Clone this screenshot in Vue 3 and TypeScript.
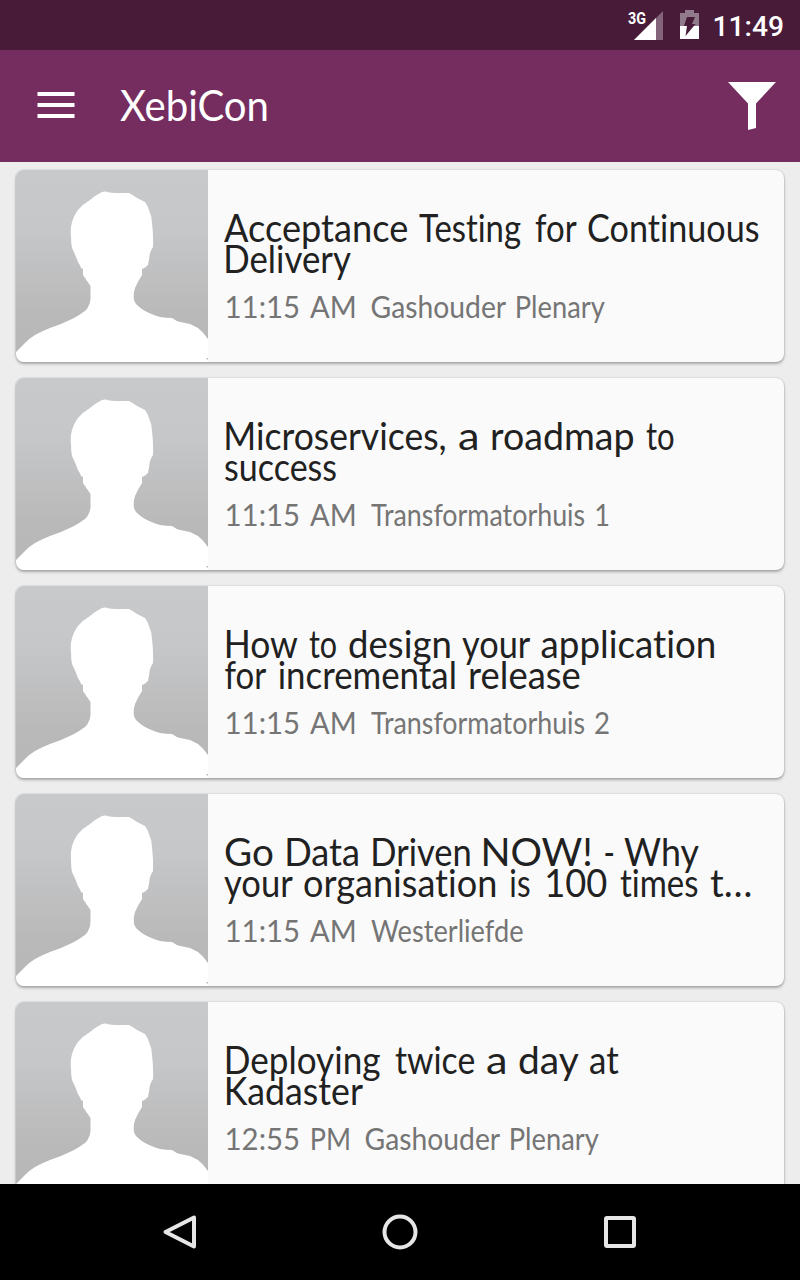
<script setup lang="ts">
interface Word {
  text: string
  x: number
  width: number
}

interface Session {
  title: Word[][]
  time: Word[]
  room: Word[]
}

type Extent = [text: string, left: number, right: number]

const TITLE = 38.5
const META = 30.5
const pen = document.createElement('canvas').getContext('2d')!

// Converts the visible left and right edges of each word into a text origin and advance.
function fit(size: number, words: Extent[]): Word[] {
  pen.font = `${size}px Lato, "Liberation Sans", sans-serif`
  return words.map(([text, left, right]) => {
    const m = pen.measureText(text)
    const scale = (right - left) / (m.actualBoundingBoxLeft + m.actualBoundingBoxRight)
    return { text, x: left + m.actualBoundingBoxLeft * scale, width: m.width * scale }
  })
}

const title = (...words: Extent[]) => fit(TITLE, words)
const meta = (...words: Extent[]) => fit(META, words)
const quarterPastEleven = meta(['11:15', 18.5, 90.5], ['AM', 102, 146.5])

const sessions: Session[] = [
  {
    title: [
      title(['Acceptance', 16, 199], ['Testing', 211, 313], ['for', 327, 368], ['Continuous', 380, 551]),
      title(['Delivery', 18, 143]),
    ],
    time: quarterPastEleven,
    room: meta(['Gashouder', 163.5, 297.5], ['Plenary', 308.5, 397]),
  },
  {
    title: [
      title(['Microservices,', 18, 237], ['a', 251, 269], ['roadmap', 284, 425], ['to', 438, 466]),
      title(['success', 17, 128.5]),
    ],
    time: quarterPastEleven,
    room: meta(['Transformatorhuis', 163, 377], ['1', 388, 400.5]),
  },
  {
    title: [
      title(['How', 18.5, 89], ['to', 101, 128.5], ['design', 141, 241.5], ['your', 254, 321.5], ['application', 333.5, 506]),
      title(['for', 16.5, 57.5], ['incremental', 71.5, 247], ['release', 262, 371.5]),
    ],
    time: quarterPastEleven,
    room: meta(['Transformatorhuis', 163, 377], ['2', 387, 401.5]),
  },
  {
    title: [
      title(['Go', 17, 65], ['Data', 79, 150], ['Driven', 165, 261.5], ['NOW!', 275.5, 382.5], ['-', 397, 405], ['Why', 416, 491]),
      title(['your', 16, 84], ['organisation', 96, 287], ['is', 303, 322], ['100', 339, 399], ['times', 412, 490], ['t…', 502, 542.5]),
    ],
    time: quarterPastEleven,
    room: meta(['Westerliefde', 163, 314.5]),
  },
  {
    title: [
      title(['Deploying', 18.5, 172.5], ['twice', 187, 266], ['a', 279, 297], ['day', 311, 370], ['at', 382, 411]),
      title(['Kadaster', 18.5, 155]),
    ],
    time: meta(['12:55', 18.5, 90.5], ['PM', 103.5, 141]),
    room: meta(['Gashouder', 157.5, 291.5], ['Plenary', 302.5, 391]),
  },
]
</script>

<template>
  <div class="screen">
    <header class="status">
      <svg class="status-icons" width="92" height="50" viewBox="0 0 92 50">
        <text class="net" x="8" y="24" textLength="18" lengthAdjust="spacingAndGlyphs">3G</text>
        <path d="M43 11V40H14Z" fill="#84647b" />
        <path d="M36 18V40H14Z" fill="#fff" />
        <path d="M65 10h9v3h5v13H60V13h5Z" fill="#917a8b" />
        <path d="M60 26h19v13H60Z" fill="#fff" />
        <path d="M67 17h8l-3 7h3.500l-10 12 1.500-10h-3Z" fill="#481b38" />
      </svg>
      <svg class="clock" width="72" height="50" viewBox="0 0 72 50">
        <text x="0.5" y="36" textLength="71.500" lengthAdjust="spacingAndGlyphs">11:49</text>
      </svg>
    </header>

    <div class="toolbar">
      <svg class="menu" width="38" height="26" viewBox="0 0 38 26">
        <path d="M.5 0H37.500V4H.5ZM.5 11H37.500V15H.5ZM.5 22H37.500V26H.5Z" fill="#fff" />
      </svg>
      <svg class="brand" width="160" height="60" viewBox="0 0 160 60">
        <text x="0" y="44.500" textLength="149" lengthAdjust="spacingAndGlyphs">XebiCon</text>
      </svg>
      <svg class="filter" width="48" height="48" viewBox="0 0 48 48">
        <path d="M0 0H48L28 21.5V46L20 48V21.5Z" fill="#fff" />
      </svg>
    </div>

    <main class="list">
      <article v-for="(s, i) in sessions" :key="i" class="card">
        <svg class="avatar" width="192" height="192" viewBox="0 0 192 192">
          <defs>
            <linearGradient :id="`shade${i}`" x1="0" y1="0" x2="0" y2="1">
              <stop offset="0" stop-color="#c8c9cb" />
              <stop offset=".3" stop-color="#c6c7c9" />
              <stop offset=".75" stop-color="#b9b9b9" />
              <stop offset="1" stop-color="#b7b7b7" />
            </linearGradient>
          </defs>
          <path :fill="`url(#shade${i})`" d="M0 0H192V192H0Z" />
          <path
            d="M0 182L9 173Q14 168 19 165Q26 161 34 158Q46 154 56 149Q62 146 66 143Q71 140 72 137Q75 132 74.500 127V116Q71 111 67 105V99L65 98Q64 95 62 92Q59 84 56 78Q55 73 55 67Q54 59 56 52Q58 45 62 40Q67 34 74 30Q80 25 86 22Q90 21 93 22.500L99 23H113Q117 25 121 28L129 32Q132 36 133 40Q136 47 136 53Q137.500 65 137 77Q135 80 134 83Q133 90 132 95Q129 98 126 99V105Q122 111 119 118Q117 124 118 130Q119 133 121 135Q126 140 131 142Q137 145 144 147Q150 148 156 148Q160 151 164 152Q169 153 174 154Q178 156 182 158Q188 163 192 169V192H0Z"
            fill="#fff"
          />
          <path d="M190.500 188h1.500v1.500h-1.500Z" fill="#bbb" />
        </svg>
        <svg class="details" width="576" height="192" viewBox="0 0 576 192">
          <text v-for="(line, n) in s.title" :key="n" class="title" :y="72.3 + n * 31">
            <template v-for="(w, k) in line" :key="k"><tspan :x="w.x" :textLength="w.width" lengthAdjust="spacingAndGlyphs">{{ w.text }}</tspan>{{ ' ' }}</template>
          </text>
          <text v-for="(part, n) in [s.time, s.room]" :key="`meta${n}`" class="meta" y="148.300">
            <template v-for="(w, k) in part" :key="k"><tspan :x="w.x" :textLength="w.width" lengthAdjust="spacingAndGlyphs">{{ w.text }}</tspan>{{ ' ' }}</template>
          </text>
        </svg>
      </article>
    </main>

    <nav class="navbar">
      <svg width="40" height="40" viewBox="0 0 40 40">
        <path d="M34 5.500V34.500L5.500 20Z" />
      </svg>
      <svg width="40" height="40" viewBox="0 0 40 40">
        <circle cx="20" cy="20" r="15.500" />
      </svg>
      <svg width="40" height="40" viewBox="0 0 40 40">
        <rect x="6" y="6" width="28" height="28" rx="1" />
      </svg>
    </nav>
  </div>
</template>

<style>
body {
  margin: 0;
}
</style>

<style scoped>
.screen {
  width: 800px;
  height: 1280px;
  display: flex;
  flex-direction: column;
  overflow: hidden;
  background: #ededed;
  font-family: Lato, 'Liberation Sans', sans-serif;
}
svg {
  display: block;
  flex: none;
}
.status {
  height: 50px;
  flex: none;
  display: flex;
  justify-content: flex-end;
  padding-right: 16px;
  background: #481b38;
}
.net {
  font: 700 17px Roboto, sans-serif;
  fill: #fff;
}
.clock {
  font: 500 28px Roboto, sans-serif;
  fill: #fff;
}
.toolbar {
  height: 112px;
  flex: none;
  box-sizing: border-box;
  display: flex;
  align-items: center;
  padding: 0 24px 0 37px;
  background: #752d60;
}
.menu {
  margin-right: 45px;
  margin-top: -2px;
}
.brand {
  font-size: 42px;
  fill: #fff;
}
.filter {
  margin-left: auto;
}
.list {
  height: 1022px;
  flex: none;
  box-sizing: border-box;
  padding: 8px 16px 0;
  display: flex;
  flex-direction: column;
  gap: 16px;
  overflow: hidden;
}
.card {
  flex: none;
  height: 192px;
  display: flex;
  overflow: hidden;
  border-radius: 8px;
  background: #fafafa;
  box-shadow: 0 2px 3px rgba(0, 0, 0, 0.28), 0 0 2px rgba(0, 0, 0, 0.2);
}
.details {
  overflow: visible;
  font-variant-ligatures: none;
}
.title {
  font-size: 38.5px;
  fill: #212121;
}
.meta {
  font-size: 30.5px;
  fill: #757575;
}
.navbar {
  flex: 1;
  display: flex;
  align-items: center;
  justify-content: center;
  gap: 180px;
  background: #000;
}
.navbar svg {
  fill: none;
  stroke: #e6e6e6;
  stroke-width: 4;
  stroke-linejoin: round;
}
</style>
